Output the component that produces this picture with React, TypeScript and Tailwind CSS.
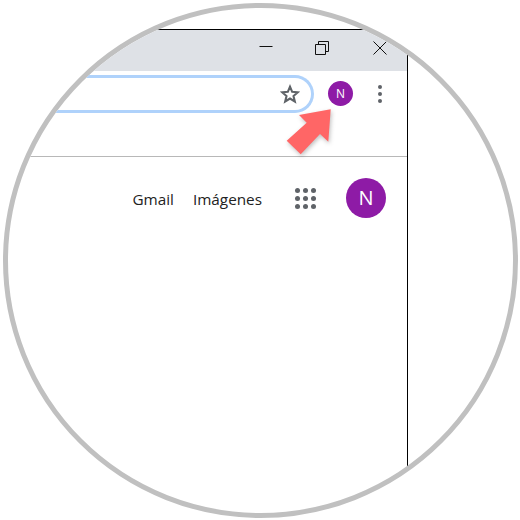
function Arrow() {
  return (
    <svg className="absolute left-[272px] top-[92px] drop-shadow-[1px_2px_2px_rgba(0,0,0,0.25)]" width="56" height="60" viewBox="0 0 56 60">
      <path d="M50.7 9.3 L48.3 41.7 L40 34 L20.7 54.3 L6.7 40.7 L26.7 22.7 L19 15 Z" fill="#ff6666" />
    </svg>
  );
}

export default function App() {
  return (
    <div className="w-[520px] h-[520px] bg-white p-[3px] font-['Open_Sans',sans-serif]">
      <div className="relative w-[515px] h-[515px] rounded-full overflow-hidden border-[5px] border-[#c0c0c0] pt-[21px]">
        <div className="w-[400px] h-full border-r border-t border-black flex flex-col">
          <div className="h-[41px] bg-[#dee1e6] flex items-center justify-end">
            <svg className="mr-[134px] mb-[10px]" width="14" height="14" viewBox="0 0 14 14" fill="none" stroke="#111" strokeWidth="1">
              <path d="M0.5 7.5 H13.5" />
            </svg>
            <svg className="absolute left-[307px] top-[33px]" width="14" height="14" viewBox="0 0 14 14" fill="none" stroke="#111" strokeWidth="1">
              <path d="M0.5 3.5 H10.5 V13.5 H0.5 Z M3.5 3.5 V0.5 H13.5 V10.5 H10.5" />
            </svg>
            <svg className="absolute left-[365px] top-[33px]" width="14" height="14" viewBox="0 0 14 14" fill="none" stroke="#111" strokeWidth="1">
              <path d="M0.5 0.5 L13.5 13.5 M13.5 0.5 L0.5 13.5" />
            </svg>
          </div>
          <div className="h-[86px] border-b border-[#b8b8b8] pt-[4px] flex items-start">
            <div className="w-[306px] h-[38px] shrink-0 border-[3px] border-l-0 border-[#afd2fb] rounded-r-[19px] flex items-center justify-end pr-[11px]">
              <svg width="20" height="20" viewBox="0 0 24 24" fill="none" stroke="#5f6368" strokeWidth="2.5" strokeLinejoin="miter">
                <path d="M12 3.2 L14.6 9.4 L21.3 10 L16.2 14.4 L17.8 21 L12 17.5 L6.2 21 L7.8 14.4 L2.7 10 L9.4 9.4 Z" />
              </svg>
            </div>
            <div className="ml-[14px] mt-[6px] w-[25px] h-[25px] rounded-full bg-[#8e1ba6] text-white text-[12px] font-medium flex items-center justify-center">
              N
            </div>
            <div className="ml-[25px] mt-[10px] flex flex-col gap-[3px]">
              <span className="w-1 h-1 rounded-full bg-[#5f6368]" />
              <span className="w-1 h-1 rounded-full bg-[#5f6368]" />
              <span className="w-1 h-1 rounded-full bg-[#5f6368]" />
            </div>
          </div>
          <div className="flex items-center justify-end pt-[21px] pr-[21px] text-[15.3px] text-[#222222]">
            <span className="pt-[2px]">Gmail</span>
            <span className="ml-[19px] pt-[2px]">Imágenes</span>
            <div className="ml-[33px] grid grid-cols-3 gap-[3px]">
              {Array.from({ length: 9 }).map((_, i) => (
                <span key={i} className="w-[5px] h-[5px] rounded-full bg-[#5f6368]" />
              ))}
            </div>
            <div className="ml-[30px] w-10 h-10 rounded-full bg-[#8e1ba6] text-white text-[20px] flex items-center justify-center">
              N
            </div>
          </div>
        </div>
        <Arrow />
      </div>
    </div>
  );
}
